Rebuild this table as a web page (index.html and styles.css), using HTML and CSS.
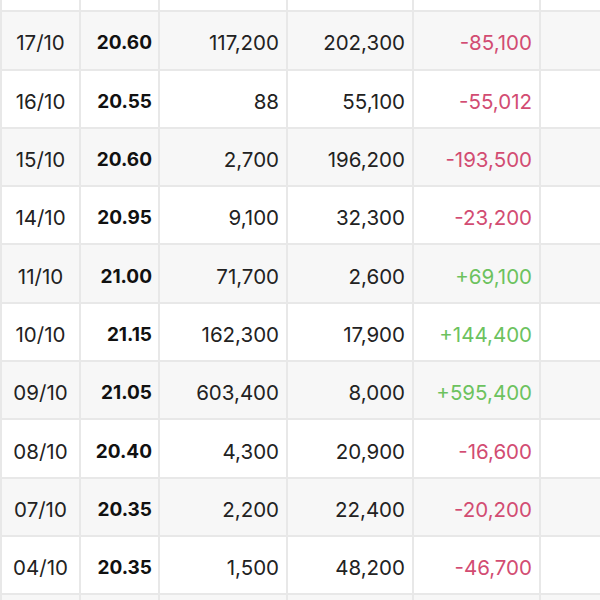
FILE: index.html
```html
<!DOCTYPE html>
<html>
<head>
<meta charset="utf-8">
<link rel="stylesheet" href="styles.css">
</head>
<body>
<div class="viewport">
<table class="grid">
<colgroup>
<col class="c-date"><col class="c-price"><col class="c-num"><col class="c-num2"><col class="c-net"><col class="c-extra">
</colgroup>
<tbody>
<tr class="odd"><td></td><td></td><td></td><td></td><td></td><td></td></tr>
<tr class="even"><td class="date">17/10</td><td class="price">20.60</td><td class="num">117,200</td><td class="num">202,300</td><td class="num neg">-85,100</td><td></td></tr>
<tr class="odd"><td class="date">16/10</td><td class="price">20.55</td><td class="num">88</td><td class="num">55,100</td><td class="num neg">-55,012</td><td></td></tr>
<tr class="even"><td class="date">15/10</td><td class="price">20.60</td><td class="num">2,700</td><td class="num">196,200</td><td class="num neg">-193,500</td><td></td></tr>
<tr class="odd"><td class="date">14/10</td><td class="price">20.95</td><td class="num">9,100</td><td class="num">32,300</td><td class="num neg">-23,200</td><td></td></tr>
<tr class="even"><td class="date">11/10</td><td class="price">21.00</td><td class="num">71,700</td><td class="num">2,600</td><td class="num pos">+69,100</td><td></td></tr>
<tr class="odd"><td class="date">10/10</td><td class="price">21.15</td><td class="num">162,300</td><td class="num">17,900</td><td class="num pos">+144,400</td><td></td></tr>
<tr class="even"><td class="date">09/10</td><td class="price">21.05</td><td class="num">603,400</td><td class="num">8,000</td><td class="num pos">+595,400</td><td></td></tr>
<tr class="odd"><td class="date">08/10</td><td class="price">20.40</td><td class="num">4,300</td><td class="num">20,900</td><td class="num neg">-16,600</td><td></td></tr>
<tr class="even"><td class="date">07/10</td><td class="price">20.35</td><td class="num">2,200</td><td class="num">22,400</td><td class="num neg">-20,200</td><td></td></tr>
<tr class="odd"><td class="date">04/10</td><td class="price">20.35</td><td class="num">1,500</td><td class="num">48,200</td><td class="num neg">-46,700</td><td></td></tr>
<tr class="even"><td></td><td></td><td></td><td></td><td></td><td></td></tr>
</tbody>
</table>
</div>
</body>
</html>
```
FILE: styles.css
```css
html, body {
  margin: 0;
  padding: 0;
  background: #ffffff;
}
.viewport {
  width: 600px;
  height: 600px;
  overflow: hidden;
}
.grid {
  border-collapse: collapse;
  table-layout: fixed;
  width: 680px;
  margin-top: -48px;
  margin-left: 0;
  font-family: "Inter", "Roboto", sans-serif;
  font-size: 20.5px;
  color: #222222;
}
.c-date { width: 79px; }
.c-price { width: 79px; }
.c-num { width: 128px; }
.c-num2 { width: 126px; }
.c-net { width: 127px; }
.c-extra { width: 141px; }
.grid td {
  height: 51.3px;
  padding: 5px 7px 0 7px;
  border: 2px solid #e8e8e8;
  white-space: nowrap;
  overflow: hidden;
}
.grid tr.even td { background: #f7f7f7; }
.grid tr.odd td { background: #ffffff; }
.date { text-align: center; }
.grid td.price { text-align: right; font-weight: 700; color: #111111; font-size: 19px; padding-right: 6px; }
.num { text-align: right; }
.neg { color: #d24c72; }
.pos { color: #6cc25e; }
```
